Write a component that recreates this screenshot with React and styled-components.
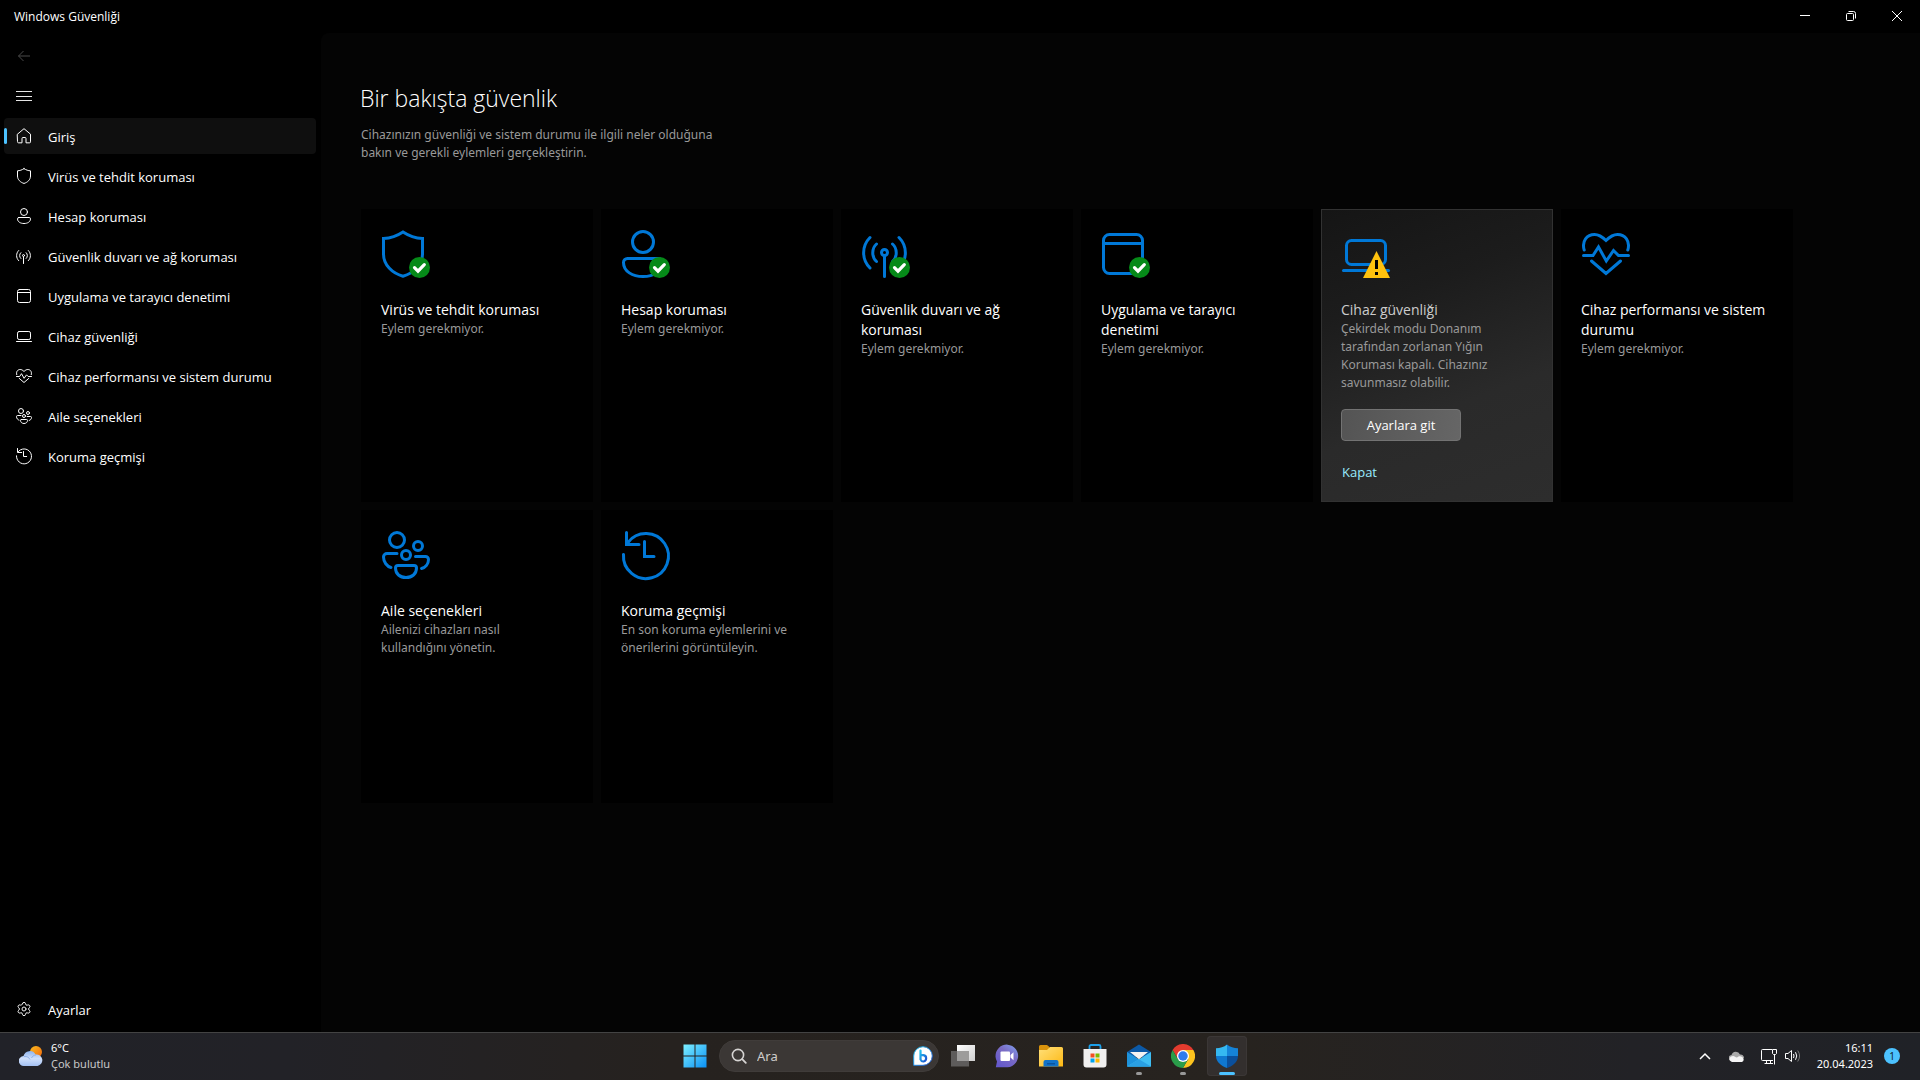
import React from "react";
import styled, { createGlobalStyle, css } from "styled-components";
import { Settings } from "lucide-react";

const GlobalStyle = createGlobalStyle`
  *, *::before, *::after { box-sizing: border-box; }
  body {
    margin: 0;
    background: #000;
    color: #fff;
    font-family: "Open Sans", "Noto Sans", sans-serif;
    font-size: 13px;
    line-height: 20px;
  }
  button, input { font: inherit; color: inherit; }
  button { padding: 0; border: 0; background: none; cursor: pointer; }
  h1, h2, p, ul { margin: 0; padding: 0; }
  ul { list-style: none; }
  svg { display: block; flex: none; }
`;

const smallFont = `"Noto Sans", "Open Sans", sans-serif`;

/* ---------- Line icons, drawn on a 48 unit grid ---------- */

const glyphs = {
  home: (
    <path d="M4.5 18.5 24 2l19.500 16.500V41.500a3 3 0 0 1-3 3H30V31.500a3 3 0 0 0-3-3h-6a3 3 0 0 0-3 3V44.500H7.500a3 3 0 0 1-3-3Z" />
  ),
  shield: (
    <path d="M24 2C18 6 11 8.200 4.500 8.500V24C4.500 35 13 43 24 46.300 35 43 43.500 35 43.500 24V8.500C37 8.200 30 6 24 2Z" />
  ),
  person: (
    <>
      <circle cx="24" cy="12" r="10.5" />
      <path d="M8.500 28.500h31a4 4 0 0 1 4 4c0 9-9 14-19.500 14s-19.500-5-19.500-14a4 4 0 0 1 4-4Z" />
    </>
  ),
  antenna: (
    <>
      <circle cx="22.5" cy="22.5" r="3" />
      <path d="M22.500 26V46.500M14.500 14C9.500 18.500 9.500 27 14.500 31.500M8 7.500C-.5 16-.5 29.500 8 38M30.500 14C35.500 18.500 35.500 27 30.500 31.500M37 7.500C45.500 16 45.500 29.500 37 38" />
    </>
  ),
  window: (
    <>
      <rect x="4.5" y="4.500" width="39" height="39" rx="6" />
      <path d="M4.500 13.500h39" />
    </>
  ),
  laptop: (
    <>
      <rect x="4.5" y="10.500" width="39" height="24" rx="5" />
      <path d="M1.500 40.500h45" />
    </>
  ),
  heart: (
    <path d="M2.200 20C-.5 11 5 4.500 12.500 4.500 17 4.500 20 6.500 24 10.500 28 6.500 31 4.500 35.500 4.500 43 4.500 48.500 11 45.800 20M1.500 25.500H11L16.500 17 24.300 31 31.500 20.500 36.500 25.500H46.500M9.500 31 24 43.500 38.500 31" />
  ),
  family: (
    <>
      <circle cx="15" cy="9" r="7.5" />
      <circle cx="36" cy="15" r="4.5" />
      <circle cx="24" cy="24" r="4.5" />
      <path d="M15 22.500H5A3.500 3.500 0 0 0 1.500 26C1.500 31 5 35.500 9 36.500M33.500 25.500H43.500A3 3 0 0 1 46.500 28.500C46.500 33 43.500 36.500 39.500 37.500M16 34.500H32A2.500 2.500 0 0 1 34.500 37C34.500 43 30 46.500 24 46.500S13.500 43 13.500 37A2.500 2.500 0 0 1 16 34.500Z" />
    </>
  ),
  history: (
    <path d="M1.500 23.500A22.500 22.500 0 1 0 6 11.500M4.500 1.500V13.500H17M22.500 10.500V25.500H32" />
  ),
};

const narrow = ["shield", "person", "window"];

const LineIcon = styled.svg.attrs({ viewBox: "0 0 48 48", "aria-hidden": true })`
  width: ${(p) => p.$size}px;
  height: ${(p) => p.$size}px;
  overflow: visible;
  .glyph {
    fill: none;
    stroke: ${(p) => p.$color};
    stroke-width: 3;
    stroke-linecap: round;
  }
`;

function NavIcon({ name }) {
  return (
    <LineIcon $size={16} $color="#fff">
      <g className="glyph">{glyphs[name]}</g>
    </LineIcon>
  );
}

function TileIcon({ name, badge }) {
  return (
    <LineIcon $size={48} $color="#0078d7">
      <g className="glyph" transform={narrow.includes(name) ? "translate(-3 0)" : undefined}>
        {glyphs[name]}
      </g>
      {badge === "ok" && (
        <>
          <circle cx="37.5" cy="37.5" r="10.5" fill="#058a18" />
          <path d="m32.500 37.700 3.500 3.500 6.300-6.500" fill="none" stroke="#fff" strokeWidth="3.2" strokeLinecap="round" />
        </>
      )}
      {badge === "warning" && (
        <>
          <path d="M34.500 21 48 48H21Z" fill="#ffc20e" />
          <path d="M33 30h3v9h-3zM33 42h3v3h-3z" fill="#000" />
        </>
      )}
    </LineIcon>
  );
}

/* ---------- Window frame ---------- */

const Desktop = styled.div`
  display: grid;
  grid-template-rows: 33px 1fr 48px;
  min-height: 100vh;
`;

const TitleBar = styled.header`
  display: flex;
  justify-content: space-between;
  padding-left: 14px;
  font-size: 12px;
`;

const WindowTitle = styled.span`
  align-self: center;
`;

const WindowControls = styled.div`
  display: flex;
`;

const ControlButton = styled.button`
  display: grid;
  place-items: center;
  width: 46px;
  height: 31px;
`;

const WindowBody = styled.div`
  display: grid;
  grid-template-columns: 321px 1fr;
`;

/* ---------- Sidebar ---------- */

const Sidebar = styled.nav`
  display: flex;
  flex-direction: column;
  justify-content: space-between;
  padding: 5px 5px 5px 4px;
`;

const NavList = styled.ul`
  display: flex;
  flex-direction: column;
  gap: 4px;
`;

const NavButton = styled.button`
  position: relative;
  display: flex;
  align-items: center;
  gap: 16px;
  width: ${(p) => (p.$compact ? "40px" : "100%")};
  height: 36px;
  padding: 0 12px;
  border-radius: 4px;
  line-height: 22px;
  text-align: left;
  ${(p) =>
    p.$active &&
    css`
      background: #0f0f0f;
      &::before {
        content: "";
        position: absolute;
        left: 0;
        width: 3px;
        height: 16px;
        border-radius: 2px;
        background: #4cc2ff;
      }
    `}
`;

const NavLabel = styled.span`
  padding-top: 2px;
`;

/* ---------- Content ---------- */

const Main = styled.main`
  padding: 49px 40px 40px 39px;
  border-top-left-radius: 8px;
  background: #040404;
`;

const PageTitle = styled.h1`
  font-size: 23px;
  font-weight: 300;
  line-height: 32px;
`;

const PageIntro = styled.p`
  max-width: 371px;
  margin: 12px 1px 0;
  color: #999;
  font-family: ${smallFont};
  font-size: 12px;
  line-height: 18px;
`;

const TileGrid = styled.div`
  display: grid;
  grid-template-columns: repeat(auto-fill, 232px);
  grid-auto-rows: minmax(293px, auto);
  gap: 8px;
  margin: 47px 0 0 1px;
`;

const Tile = styled.section`
  display: flex;
  flex-direction: column;
  align-items: flex-start;
  padding: 20px 19px 18px;
  border: 1px solid ${(p) => (p.$raised ? "#323232" : "#000")};
  background: ${(p) => (p.$raised ? "linear-gradient(160deg, #151515 0%, #1c1c1c 30%, #2a2a2a 65%, #2d2d2d 100%)" : "#000")};
  > svg { margin: 0 1px 22px; }
`;

const TileTitle = styled.h2`
  color: ${(p) => (p.$dim ? "#ccc" : "#fff")};
  font-size: 14px;
  font-weight: 400;
  line-height: 20px;
`;

const TileText = styled.p`
  max-width: 180px;
  color: #999;
  font-family: ${smallFont};
  font-size: 12px;
  line-height: 18px;
`;

const TileButton = styled.button`
  width: 120px;
  height: 32px;
  margin-top: 17px;
  border: 1px solid #737373;
  border-radius: 4px;
  background: linear-gradient(100deg, #545454, #666);
`;

const TileLink = styled.a`
  margin: 21px 1px 0;
  color: #99ebff;
  text-decoration: none;
`;

/* ---------- Taskbar ---------- */

const Taskbar = styled.footer`
  display: grid;
  grid-template-columns: 1fr auto 1fr;
  align-items: center;
  box-shadow: inset 0 1px #434343;
  background: linear-gradient(90deg, #212228 0%, #222227 15%, #26221f 35%, #27231f 65%, #222226 85%, #202227 100%);
  font-family: ${smallFont};
  font-size: 11px;
  line-height: 16px;
`;

const Weather = styled.button`
  display: flex;
  align-items: center;
  justify-self: start;
  gap: 8px;
  padding-left: 19px;
  text-align: left;
`;

const Lines = styled.span`
  display: flex;
  flex-direction: column;
`;

const Muted = styled.span`
  color: #c8c8c8;
`;

const TaskItems = styled.div`
  display: flex;
  align-items: center;
  gap: 4px;
  padding-left: 2px;
`;

const TaskButton = styled.button`
  position: relative;
  display: grid;
  place-items: center;
  width: 40px;
  height: 40px;
  border-radius: 4px;
  ${(p) => p.$state === "active" && css`
    background: #332f2e;
    box-shadow: inset 0 0 0 1px #3b3736;
  `}
  ${(p) => p.$state && css`
    &::after {
      content: "";
      position: absolute;
      bottom: 1px;
      width: ${p.$state === "active" ? 16 : 6}px;
      height: 3px;
      border-radius: 2px;
      background: ${p.$state === "active" ? "#4cc2ff" : "#989898"};
    }
  `}
`;

const SearchBox = styled.label`
  display: flex;
  align-items: center;
  gap: 10px;
  width: 220px;
  height: 32px;
  padding: 0 5px 0 11px;
  border: 1px solid #403c3a;
  border-radius: 16px;
  background: #3b3735;
`;

const SearchInput = styled.input`
  flex: 1;
  min-width: 0;
  padding: 0;
  border: 0;
  outline: 0;
  background: none;
  font-size: 13px;
  &::placeholder { color: #cfcdcc; opacity: 1; }
`;

const Tray = styled.div`
  display: flex;
  align-items: center;
  justify-self: end;
  padding-right: 20px;
`;

const TrayButton = styled.button`
  display: grid;
  place-items: center;
  width: 32px;
  height: 40px;
`;

const NetworkSound = styled.button`
  display: flex;
  align-items: center;
  gap: 8px;
  height: 40px;
  padding: 0 8px;
`;

const Clock = styled.button`
  display: flex;
  flex-direction: column;
  padding: 0 11px 0 8px;
  text-align: right;
`;

const Notice = styled.button`
  width: 16px;
  height: 16px;
  border-radius: 8px;
  background: #4cc2ff;
  color: #10242f;
  font-size: 10px;
  line-height: 16px;
  text-align: center;
`;

/* ---------- Taskbar pictures ---------- */

const WeatherIcon = () => (
  <svg width="24" height="22" viewBox="0 0 24 22" aria-hidden="true">
    <defs>
      <linearGradient id="sun" x2="1" y2="1"><stop stopColor="#fbbd1f" /><stop offset="1" stopColor="#f0660d" /></linearGradient>
      <linearGradient id="cloud" x2="0" y2="1"><stop stopColor="#8fb5ee" /><stop offset=".5" stopColor="#cfe0fb" /><stop offset="1" stopColor="#a3c0f2" /></linearGradient>
    </defs>
    <circle cx="17" cy="7" r="6" fill="url(#sun)" />
    <path d="M5 21a5 5 0 0 1-.5-10A6.500 6.500 0 0 1 16.500 9.500 5.800 5.800 0 0 1 18.500 21Z" fill="url(#cloud)" />
    <path d="M5 11.500c3-.5 5 1 6 3M17 10c-2 0-4 1.500-4.500 3" fill="none" stroke="#84a8e4" strokeWidth=".8" />
  </svg>
);

const StartIcon = () => (
  <svg width="24" height="24" viewBox="0 0 24 24" aria-hidden="true">
    <defs><linearGradient id="win" x2="1" y2="1"><stop stopColor="#7df0ff" /><stop offset="1" stopColor="#0a90f5" /></linearGradient></defs>
    <path d="M.5.500h11v11H.5zM12.500.500h11v11h-11zM.5 12.500h11v11H.5zM12.500 12.500h11v11h-11z" fill="url(#win)" />
  </svg>
);

const SearchIcon = () => (
  <svg width="16" height="16" viewBox="0 0 16 16" fill="none" stroke="#d6d4d3" aria-hidden="true">
    <circle cx="7" cy="7" r="5.6" strokeWidth="1.6" />
    <path d="m11.200 11.200 3.600 3.600" strokeWidth="1.8" strokeLinecap="round" />
  </svg>
);

const BingIcon = () => (
  <svg width="20" height="20" viewBox="0 0 20 20" aria-hidden="true">
    <defs><linearGradient id="bing" x2="1" y2="1"><stop stopColor="#22c3ee" /><stop offset="1" stopColor="#1b4fd0" /></linearGradient></defs>
    <path d="M.7 19.300V10A9.300 9.300 0 1 1 10 19.300Z" fill="#fff" stroke="url(#bing)" strokeWidth="1" />
    <path d="M7.500 4.500V13.500A3 3 0 0 0 10.500 15.500 3.200 3.200 0 0 0 10.500 9.200H8" fill="none" stroke="url(#bing)" strokeWidth="2.2" strokeLinecap="round" />
  </svg>
);

const TaskViewIcon = () => (
  <svg width="24" height="24" viewBox="0 0 24 24" aria-hidden="true">
    <defs><linearGradient id="tv" x2="1" y2="1"><stop stopColor="#fff" /><stop offset="1" stopColor="#cfcfcf" /></linearGradient></defs>
    <path d="M6 1h18v16H6z" fill="url(#tv)" />
    <path d="M0 7h18v15.500H0z" fill="#5e5c5b" />
    <path d="M6 7h12v10H6z" fill="#9d9c9b" />
  </svg>
);

const ChatIcon = () => (
  <svg width="24" height="24" viewBox="0 0 24 24" aria-hidden="true">
    <defs><linearGradient id="chat" x1="1" x2=".2" y2="1"><stop stopColor="#7fa3f2" /><stop offset=".45" stopColor="#7b6cc4" /><stop offset="1" stopColor="#6458cc" /></linearGradient></defs>
    <path d="M.8 23.200 2 17.500A11.300 11.300 0 1 1 12.500 23.200Z" fill="url(#chat)" />
    <rect x="5.500" y="7.500" width="9.500" height="9.500" rx="1" fill="#fff" />
    <path d="m15.500 11 3-2.800v8l-3-2.800Z" fill="#fff" />
  </svg>
);

const FolderIcon = () => (
  <svg width="24" height="24" viewBox="0 0 24 24" aria-hidden="true">
    <defs>
      <linearGradient id="fold" x2="1" y2="1"><stop stopColor="#ffe07a" /><stop offset="1" stopColor="#fdb813" /></linearGradient>
    </defs>
    <path d="M0 2.500A1.500 1.500 0 0 1 1.500 1H8l2.500 2v4H0Z" fill="#d9930c" />
    <path d="M0 6h8l3-3h11.500A1.500 1.500 0 0 1 24 4.500v18H0Z" fill="url(#fold)" />
    <path d="M4.500 22.500V18A2 2 0 0 1 6.500 16h11a2 2 0 0 1 2 2v4.500Z" fill="#1273c8" />
    <path d="M8 19h8v1.500H8z" fill="#0a559f" />
  </svg>
);

const StoreIcon = () => (
  <svg width="24" height="24" viewBox="0 0 24 24" aria-hidden="true">
    <path d="M6.500 6V2.500A1.500 1.500 0 0 1 8 1h8a1.500 1.500 0 0 1 1.500 1.500V6" fill="none" stroke="#1c9fe8" strokeWidth="1.8" />
    <path d="M.5 5h23v15.500a3 3 0 0 1-3 3h-17a3 3 0 0 1-3-3Z" fill="#f1f0ef" />
    <path d="M7.500 9.500h4v4h-4z" fill="#f25022" /><path d="M12.500 9.500h4v4h-4z" fill="#7fba00" />
    <path d="M7.500 14.500h4v4h-4z" fill="#00a4ef" /><path d="M12.500 14.500h4v4h-4z" fill="#ffb900" />
  </svg>
);

const MailIcon = () => (
  <svg width="24" height="24" viewBox="0 0 24 24" aria-hidden="true">
    <path d="M0 8 12 .5 24 8v5H0Z" fill="#0c59a6" />
    <path d="M0 8v14.500h24Z" fill="#1e93dc" />
    <path d="m0 22.500 24-14.500v14.500Z" fill="#3fbdf2" />
    <path d="M12 15.200 24 22.500H0Z" fill="#2a9fe2" />
    <path d="M3 8h18l-9 7.200Z" fill="#f3f3f3" />
  </svg>
);

const ChromeIcon = () => (
  <svg width="24" height="24" viewBox="0 0 48 48" aria-hidden="true">
    <path d="M24 12H44.800A24 24 0 0 1 24 48L34.400 30Z" fill="#fcc31e" />
    <path d="M3.200 12A24 24 0 0 1 44.800 12H24L13.600 30Z" fill="#e33b2e" />
    <path d="M3.200 12 13.600 30 24 36 34.400 30 24 48A24 24 0 0 1 3.200 12Z" fill="#2a9d4a" />
    <circle cx="24" cy="24" r="12" fill="#fff" />
    <circle cx="24" cy="24" r="9.5" fill="#2f7bee" />
  </svg>
);

const DefenderIcon = () => (
  <svg width="24" height="24" viewBox="0 0 24 24" aria-hidden="true">
    <path d="M12 .5C9 3 5 4.200 1 4.200V12H12Z" fill="#35b8f1" />
    <path d="M12 .5C15 3 19 4.200 23 4.200V12H12Z" fill="#1583d8" />
    <path d="M1 12c0 6 5.500 10 11 12V12Z" fill="#0f78d0" />
    <path d="M23 12c0 6-5.500 10-11 12V12Z" fill="#0a4f9c" />
  </svg>
);

const ChevronIcon = () => (
  <svg width="12" height="8" viewBox="0 0 12 8" fill="none" stroke="#fff" strokeWidth="1.5" aria-hidden="true">
    <path d="m1 7 5-5 5 5" />
  </svg>
);

const CloudIcon = () => (
  <svg width="16" height="11" viewBox="0 0 16 11" aria-hidden="true">
    <path d="M3 10a3 3 0 0 1-.5-6A4.500 4.500 0 0 1 11 3.500 3.500 3.500 0 0 1 15 7Z" fill="#aaa" />
    <path d="M3 11a3 3 0 0 1-1-5.500C5 4 6 6 8 6.500c2-2 4-1.500 5-.5a2.700 2.700 0 0 1 0 5Z" fill="#f5f5f5" />
  </svg>
);

const NetworkIcon = () => (
  <svg width="16" height="17" viewBox="0 0 16 17" fill="none" stroke="#fff" aria-hidden="true">
    <path d="M11 1.500H1.500A1 1 0 0 0 .5 2.500V11.500A1 1 0 0 0 1.500 12.500H12M3.500 15.500H12M5.500 12.500V15.500M9.500 12.500V15.500M13.500 7V16.500M11.500 1.500H15.500V5.500L14.500 6.500H12.500L11.500 5.500Z" />
  </svg>
);

const SpeakerIcon = () => (
  <svg width="16" height="14" viewBox="0 0 16 14" fill="none" stroke="#fff" aria-hidden="true">
    <path d="M.5 4.500H3L6.500 1.500V12.500L3 9.500H.5Z" />
    <path d="M8.500 5Q9.500 7 8.500 9M10.500 3.200Q13 7 10.500 10.800" />
    <path d="M12.700 1.500Q16.500 7 12.700 12.500" stroke="#777" />
  </svg>
);

/* ---------- Data ---------- */

const navItems = [
  ["home", "Giriş"],
  ["shield", "Virüs ve tehdit koruması"],
  ["person", "Hesap koruması"],
  ["antenna", "Güvenlik duvarı ve ağ koruması"],
  ["window", "Uygulama ve tarayıcı denetimi"],
  ["laptop", "Cihaz güvenliği"],
  ["heart", "Cihaz performansı ve sistem durumu"],
  ["family", "Aile seçenekleri"],
  ["history", "Koruma geçmişi"],
];

const tiles = [
  { icon: "shield", badge: "ok", title: "Virüs ve tehdit koruması", text: "Eylem gerekmiyor." },
  { icon: "person", badge: "ok", title: "Hesap koruması", text: "Eylem gerekmiyor." },
  { icon: "antenna", badge: "ok", title: "Güvenlik duvarı ve ağ koruması", text: "Eylem gerekmiyor." },
  { icon: "window", badge: "ok", title: "Uygulama ve tarayıcı denetimi", text: "Eylem gerekmiyor." },
  {
    icon: "laptop",
    badge: "warning",
    title: "Cihaz güvenliği",
    text: "Çekirdek modu Donanım tarafından zorlanan Yığın Koruması kapalı. Cihazınız savunmasız olabilir.",
    action: "Ayarlara git",
    dismiss: "Kapat",
  },
  { icon: "heart", title: "Cihaz performansı ve sistem durumu", text: "Eylem gerekmiyor." },
  { icon: "family", title: "Aile seçenekleri", text: "Ailenizi cihazları nasıl kullandığını yönetin." },
  { icon: "history", title: "Koruma geçmişi", text: "En son koruma eylemlerini ve önerilerini görüntüleyin." },
];

const apps = [
  ["Görev görünümü", TaskViewIcon],
  ["Sohbet", ChatIcon],
  ["Dosya Gezgini", FolderIcon],
  ["Microsoft Store", StoreIcon],
  ["Posta", MailIcon, "running"],
  ["Google Chrome", ChromeIcon, "running"],
  ["Windows Güvenliği", DefenderIcon, "active"],
];

export default function App() {
  return (
    <Desktop>
      <GlobalStyle />
      <TitleBar>
        <WindowTitle>Windows Güvenliği</WindowTitle>
        <WindowControls>
          <ControlButton aria-label="Simge durumuna küçült">
            <svg width="10" height="10" viewBox="0 0 10 10" stroke="#fff"><path d="M0 4.500h10" /></svg>
          </ControlButton>
          <ControlButton aria-label="Önceki boyut">
            <svg width="10" height="10" viewBox="0 0 10 10" fill="none" stroke="#fff">
              <rect x=".5" y="2.500" width="7" height="7" rx="1" />
              <path d="M2.500.500h5a2 2 0 0 1 2 2v5" />
            </svg>
          </ControlButton>
          <ControlButton aria-label="Kapat">
            <svg width="10" height="10" viewBox="0 0 10 10" stroke="#fff"><path d="m0 0 10 10M10 0 0 10" /></svg>
          </ControlButton>
        </WindowControls>
      </TitleBar>

      <WindowBody>
        <Sidebar>
          <NavList>
            <li>
              <NavButton $compact aria-label="Geri" disabled>
                <svg width="16" height="16" viewBox="0 0 16 16" fill="none" stroke="#4a4a4a"><path d="M14 8H2.500M7.500 3l-5 5 5 5" /></svg>
              </NavButton>
            </li>
            <li>
              <NavButton $compact aria-label="Menü">
                <svg width="16" height="16" viewBox="0 0 16 16" stroke="#e6e6e6"><path d="M0 3.500h16M0 8.500h16M0 12.500h16" /></svg>
              </NavButton>
            </li>
            {navItems.map(([icon, label], i) => (
              <li key={icon}>
                <NavButton $active={i === 0}>
                  <NavIcon name={icon} />
                  <NavLabel>{label}</NavLabel>
                </NavButton>
              </li>
            ))}
          </NavList>
          <NavButton>
            <Settings size={16} strokeWidth={1.5} color="#f2f2f2" />
            <NavLabel>Ayarlar</NavLabel>
          </NavButton>
        </Sidebar>

        <Main>
          <PageTitle>Bir bakışta güvenlik</PageTitle>
          <PageIntro>
            Cihazınızın güvenliği ve sistem durumu ile ilgili neler olduğuna bakın ve gerekli eylemleri gerçekleştirin.
          </PageIntro>
          <TileGrid>
            {tiles.map((t) => (
              <Tile key={t.icon} $raised={!!t.action}>
                <TileIcon name={t.icon} badge={t.badge} />
                <TileTitle $dim={!!t.action}>{t.title}</TileTitle>
                <TileText>{t.text}</TileText>
                {t.action && <TileButton>{t.action}</TileButton>}
                {t.dismiss && <TileLink href="#kapat">{t.dismiss}</TileLink>}
              </Tile>
            ))}
          </TileGrid>
        </Main>
      </WindowBody>

      <Taskbar>
        <Weather>
          <WeatherIcon />
          <Lines>
            <span>6°C</span>
            <Muted>Çok bulutlu</Muted>
          </Lines>
        </Weather>
        <TaskItems>
          <TaskButton aria-label="Başlat"><StartIcon /></TaskButton>
          <SearchBox>
            <SearchIcon />
            <SearchInput type="text" placeholder="Ara" aria-label="Ara" />
            <BingIcon />
          </SearchBox>
          {apps.map(([label, Icon, state]) => (
            <TaskButton key={label} aria-label={label} $state={state}><Icon /></TaskButton>
          ))}
        </TaskItems>
        <Tray>
          <TrayButton aria-label="Gizli simgeler"><ChevronIcon /></TrayButton>
          <TrayButton aria-label="OneDrive"><CloudIcon /></TrayButton>
          <NetworkSound aria-label="Ağ ve ses"><NetworkIcon /><SpeakerIcon /></NetworkSound>
          <Clock>
            <span>16:11</span>
            <span>20.04.2023</span>
          </Clock>
          <Notice>1</Notice>
        </Tray>
      </Taskbar>
    </Desktop>
  );
}
